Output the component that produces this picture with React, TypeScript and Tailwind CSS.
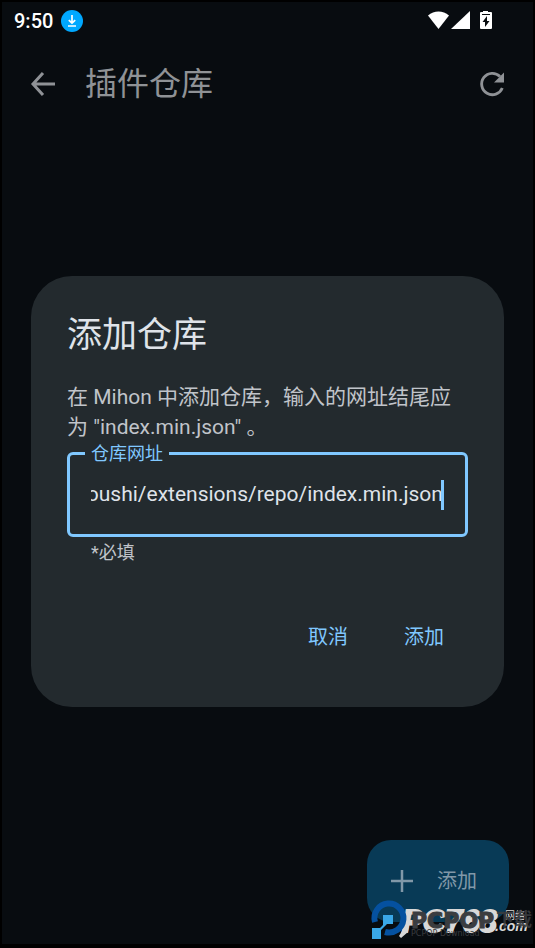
import { useEffect, useRef } from 'react'

function StatusBar() {
  return (
    <div className="flex h-9 items-center justify-between pt-px pl-3 pr-10">
      <div className="flex items-center gap-2">
        <span className="font-['Roboto'] text-xl font-medium text-white">9:50</span>
        <svg className="size-[22px]" viewBox="0 0 22 22" aria-hidden="true">
          <circle cx="11" cy="11" r="11" fill="#00a8ff" />
          <path d="M11 5v8M7.8 10.2 11 13.2l3.2-3M7 16h8" fill="none" stroke="#fff" strokeWidth="1.7" />
        </svg>
      </div>
      <svg className="h-5 w-[66px]" viewBox="0 0 66 20" fill="#fff" aria-hidden="true">
        <path d="M1 4.500C7-1 16-1 22 4.500L11.500 18z" />
        <path d="M43 0v18H24z" />
        <path
          fillRule="evenodd"
          d="M56 0h5v1h3q1 0 1 1v15q0 1-1 1H54q-1 0-1-1V2q0-1 1-1h2zM60 5l-4.500 6h2.500v5l4.500-6h-2.500z"
        />
        <path d="M55 3.500h8" stroke="#080c10" />
      </svg>
    </div>
  )
}

function TopBar() {
  return (
    <header className="flex h-23 items-center px-[27px] text-[#8f9296]">
      <button type="button" aria-label="返回" className="size-7">
        <svg className="size-7" viewBox="0 0 28 28" fill="none" stroke="currentColor" strokeWidth="3" aria-hidden="true">
          <path d="M26 14H4M14 3 4 14 14 25" />
        </svg>
      </button>
      <h1 className="ml-7 flex-1 text-[32px] leading-10">插件仓库</h1>
      <button type="button" aria-label="刷新" className="size-7">
        <svg className="size-7" viewBox="0 0 28 28" aria-hidden="true">
          <path d="M22 6.500A10.700 10.700 0 1 0 24.300 18" fill="none" stroke="currentColor" strokeWidth="2.800" />
          <path d="M26 2.500v10H16z" fill="currentColor" />
        </svg>
      </button>
    </header>
  )
}

function RepoDialog() {
  const inputRef = useRef<HTMLInputElement>(null)

  // keep the end of the address in view
  useEffect(() => {
    const el = inputRef.current
    if (el) el.scrollLeft = el.scrollWidth
  }, [])

  return (
    <div
      role="dialog"
      aria-labelledby="dialog-title"
      className="w-full rounded-[41px] bg-[#232a2e] px-9 pt-[38px] pb-[42px] text-[#c0c4ca]"
    >
      <h2 id="dialog-title" className="text-[35px] leading-11 text-[#dfe3e9]">
        添加仓库
      </h2>
      <p className="mt-6 text-[21px] leading-[30px]">
        在 Mihon 中添加仓库，输入的网址结尾应为 "index.min.json" 。
      </p>
      <fieldset className="rounded-md border-3 border-[#80c8ff] px-[15px] pb-6">
        <legend className="px-1.5 text-lg leading-6 text-[#80c8ff]">
          <label htmlFor="repo-url">仓库网址</label>
        </legend>
        <div className="flex items-center px-1.5 pt-[14px]">
          <input
            id="repo-url"
            ref={inputRef}
            type="text"
            aria-describedby="repo-hint"
            defaultValue="youshi/extensions/repo/index.min.json"
            className="h-[30px] min-w-0 flex-1 bg-transparent text-[21px] text-[#dfe3e9] outline-none"
          />
          <span className="z-10 -ml-0.5 h-[30px] w-[3px] bg-[#80c8ff]" />
        </div>
      </fieldset>
      <p id="repo-hint" className="mt-1 pl-6 text-lg leading-6">
        *必填
      </p>
      <div className="mt-11 mr-1 flex justify-end gap-4 text-xl text-[#80c8ff]">
        <button type="button" className="h-14 px-5">取消</button>
        <button type="button" className="h-14 px-5">添加</button>
      </div>
    </div>
  )
}

function Watermark() {
  return (
    <svg className="absolute right-0 bottom-0 h-[50px] w-[164px]" viewBox="0 0 164 50" aria-hidden="true">
      <g fill="#d8d8d8" fontFamily="Liberation Sans" fontWeight="700" fontStyle="italic">
        <path d="M34 18h8l-3 20-7 6-2-2 3-5z" />
        <text x="33" y="38" stroke="#d8d8d8" strokeWidth="2" fontSize="31">
          PC768
        </text>
        <text x="126" y="37" fontSize="14">
          .com
        </text>
      </g>
      <text x="136" y="25" fill="#d8d8d8" fontFamily="Noto Sans CJK SC" fontSize="10">
        网络
      </text>
      <g fill="#3b3d40" fontFamily="DejaVu Sans" fontWeight="700">
        <text x="42" y="34" fontSize="22" stroke="#3b3d40">
          PCPOP
        </text>
        <text x="127" y="32" fontSize="18" fontFamily="Noto Sans CJK SC" fillOpacity="0.9">
          下载
        </text>
        <text x="42" y="42" fill="#3b3d40" fontSize="8" fontWeight="400">
          PCPOP Download
        </text>
      </g>
      <path d="M6 28A14.500 14.500 0 1 1 16 38" fill="none" stroke="#0551a0" strokeWidth="6" />
      <path d="M14 21h10v9h-6l-6 6v9H3V34h8l3-3z" fill="#3aa8e8" />
    </svg>
  )
}

export default function App() {
  return (
    <div className="relative flex min-h-screen flex-col border-2 border-b-4 border-black bg-[#080c10] font-['Roboto','Noto_Sans_CJK_SC',sans-serif]">
      <StatusBar />
      <TopBar />
      <main className="flex-1" />
      <div className="flex justify-end pr-6 pb-[22px]">
        <button
          type="button"
          className="flex h-[82px] items-center gap-6 rounded-3xl bg-[#083a56] pr-8 pl-6 text-xl text-[#8198a8]"
        >
          <svg className="size-[22px]" viewBox="0 0 22 22" stroke="currentColor" strokeWidth="2.500" aria-hidden="true">
            <path d="M11 0v22M0 11h22" />
          </svg>
          添加
        </button>
      </div>
      <div className="absolute inset-0 flex items-center px-[29px] pt-9">
        <RepoDialog />
      </div>
      <Watermark />
    </div>
  )
}
